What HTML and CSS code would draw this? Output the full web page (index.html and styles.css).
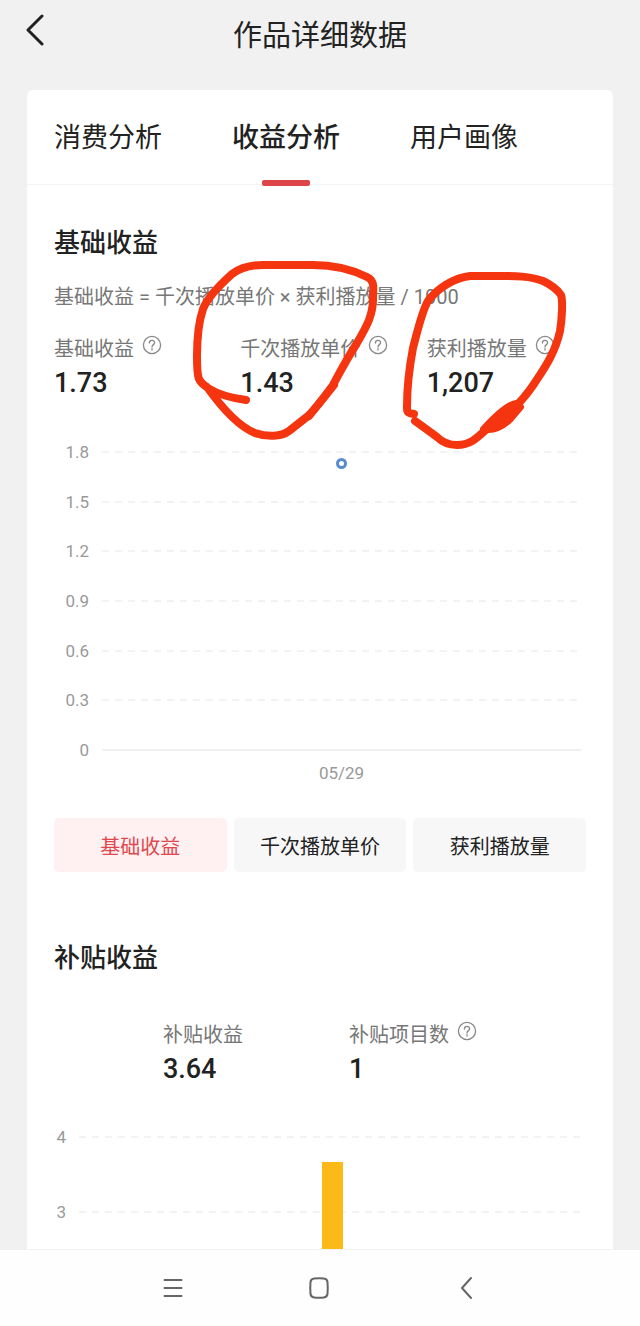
FILE: index.html
```html
<!DOCTYPE html>
<html lang="zh-CN">
<head>
    <meta charset="UTF-8">
    <meta name="viewport" content="width=device-width, initial-scale=1.0">
    <title>作品详细数据</title>
    <link rel="stylesheet" href="styles.css">
</head>
<body>

    <header class="header">
        <button class="back" aria-label="返回">
            <svg width="18" height="32" viewBox="0 0 18 32"><path d="M16 2 L2 16 L16 30"/></svg>
        </button>
        <h1>作品详细数据</h1>
    </header>

    <main class="card">

        <nav class="tabs">
            <button class="tab">消费分析</button>
            <button class="tab active">收益分析</button>
            <button class="tab">用户画像</button>
        </nav>

        <!-- Basic earnings -->
        <section class="section">
            <h2>基础收益</h2>
            <p class="formula">基础收益 = 千次播放单价 × 获利播放量 / 1000</p>

            <div class="stats">
                <div class="stat">
                    <div class="stat-label">基础收益
                        <svg class="help" viewBox="0 0 20 20"><circle cx="10" cy="10" r="8.6"/><path d="M7.4 8 C7.4 4.6 12.6 4.6 12.6 7.8 C12.6 9.7 10 9.6 10 12"/><path d="M10 13.7 V15"/></svg>
                    </div>
                    <div class="stat-value">1.73</div>
                </div>
                <div class="stat">
                    <div class="stat-label">千次播放单价
                        <svg class="help" viewBox="0 0 20 20"><circle cx="10" cy="10" r="8.6"/><path d="M7.4 8 C7.4 4.6 12.6 4.6 12.6 7.8 C12.6 9.7 10 9.6 10 12"/><path d="M10 13.7 V15"/></svg>
                    </div>
                    <div class="stat-value">1.43</div>
                </div>
                <div class="stat">
                    <div class="stat-label">获利播放量
                        <svg class="help" viewBox="0 0 20 20"><circle cx="10" cy="10" r="8.6"/><path d="M7.4 8 C7.4 4.6 12.6 4.6 12.6 7.8 C12.6 9.7 10 9.6 10 12"/><path d="M10 13.7 V15"/></svg>
                    </div>
                    <div class="stat-value">1,207</div>
                </div>
            </div>

            <div class="chart line-chart">
                <div class="row"><span>1.8</span><i></i></div>
                <div class="row"><span>1.5</span><i></i></div>
                <div class="row"><span>1.2</span><i></i></div>
                <div class="row"><span>0.9</span><i></i></div>
                <div class="row"><span>0.6</span><i></i></div>
                <div class="row"><span>0.3</span><i></i></div>
                <div class="row base"><span>0</span><i></i></div>
                <div class="plot"><b class="dot" style="bottom: 96%"></b></div>
            </div>
            <div class="x-label">05/29</div>

            <div class="switch">
                <button class="active">基础收益</button>
                <button>千次播放单价</button>
                <button>获利播放量</button>
            </div>

            <!-- Hand-drawn marks -->
            <svg class="marks" viewBox="27 185 586 280">
                <path d="M246 400 C231 398 219 395 208 388 C198 381 197 380 197 356 C197 338 199 321 203 309 C208 296 222 283 232 274 C240 268 249 265 263 265 H313 C333 265 353 270 367 277 C373 280 374 284 373 294 C374 314 367 326 357 343 C345 362 340 372 333 385 C325 396 318 406 308 416 L289 431 C281 437 267 437 255 433 C235 425 217 401 207 387"/>
                <path d="M334 385 L309 416"/>
                <path d="M414 414 C407 413 407 412 407 407 C407 385 409 369 413 348 C418 329 422 311 428 301 C437 289 453 278 470 276 H496 C516 276 530 276 543 281 C550 284 558 290 561 295 C563 301 562 319 560 331 C555 354 543 370 534 384 C520 405 504 418 489 427 C476 439 470 445 457 445 C449 445 443 443 437 437 C429 431 422 426 415 421"/>
                <path class="fill" d="M516 403 C508 404 494 417 483 429 C493 432 503 427 510 420 L521 407 Z"/>
            </svg>
        </section>

        <!-- Subsidy earnings -->
        <section class="section subsidy">
            <h2>补贴收益</h2>

            <div class="stats centered">
                <div class="stat">
                    <div class="stat-label">补贴收益</div>
                    <div class="stat-value">3.64</div>
                </div>
                <div class="stat">
                    <div class="stat-label">补贴项目数
                        <svg class="help" viewBox="0 0 20 20"><circle cx="10" cy="10" r="8.6"/><path d="M7.4 8 C7.4 4.6 12.6 4.6 12.6 7.8 C12.6 9.7 10 9.6 10 12"/><path d="M10 13.7 V15"/></svg>
                    </div>
                    <div class="stat-value">1</div>
                </div>
            </div>

            <div class="chart bar-chart">
                <div class="row"><span>4</span><i></i></div>
                <div class="row"><span>3</span><i></i></div>
                <div class="plot"><b class="bar" style="height: 58%"></b></div>
            </div>
        </section>

    </main>

    <footer class="system-nav">
        <button aria-label="菜单">
            <svg width="24" height="24" viewBox="0 0 24 24"><path d="M3.5 4 H20.5 M3.5 12 H20.5 M3.5 20 H20.5"/></svg>
        </button>
        <button aria-label="主页">
            <svg width="24" height="24" viewBox="0 0 24 24"><path d="M6 2.6 Q11 1.8 16 2.6 Q19 3 19.5 6 Q20 12 19.5 18 Q19 21 16 21.4 Q11 22.2 6 21.4 Q3 21 2.5 18 Q2 12 2.5 6 Q3 3 6 2.6 Z"/></svg>
        </button>
        <button aria-label="返回">
            <svg width="24" height="24" viewBox="0 0 24 24"><path d="M16 2 L7 12 L16 22"/></svg>
        </button>
    </footer>

</body>
</html>
```

FILE: styles.css
```css
* {
    margin: 0;
    padding: 0;
    box-sizing: border-box;
}

body {
    font-family: Roboto, 'Noto Sans CJK SC', sans-serif;
    background-color: #f1f1f1;
    color: #222;
    min-height: 100vh;
    display: flex;
    flex-direction: column;
}

button {
    font-family: inherit;
    color: inherit;
    background: none;
    border: none;
    cursor: pointer;
}

svg {
    display: block;
    fill: none;
    stroke: currentColor;
    stroke-linecap: round;
    stroke-linejoin: round;
}

/* Header */
.header {
    display: grid;
    grid-template-columns: 44px 1fr 44px;
    align-items: center;
    height: 72px;
    margin-bottom: 18px;
}

.back {
    padding: 0 0 12px 26px;
}

.back svg {
    stroke-width: 3;
}

h1 {
    font-size: 29px;
    font-weight: 400;
    line-height: 40px;
    text-align: center;
}

.card {
    flex: 1;
    margin: 0 27px;
    background-color: #fff;
    border-radius: 6px 6px 0 0;
    border-bottom: 1px solid #f3f3f3;
}

/* Tabs */
.tabs {
    display: flex;
    gap: 70px;
    padding: 0 27px;
    border-bottom: 1px solid #f4f4f4;
}

.tab {
    position: relative;
    height: 94px;
    padding-top: 2px;
    font-size: 27px;
    line-height: 40px;
    white-space: nowrap;
}

.tab.active {
    font-weight: 500;
}

.tab.active::after {
    content: '';
    position: absolute;
    left: 50%;
    bottom: -2px;
    width: 48px;
    height: 6px;
    margin-left: -24px;
    border-radius: 2px;
    background-color: #de4549;
}

/* Sections */
.section {
    position: relative;
    padding: 40px 27px 0;
}

.subsidy {
    padding-top: 68px;
}

h2 {
    font-size: 26px;
    font-weight: 500;
    line-height: 36px;
}

.formula {
    margin-top: 22px;
    font-size: 20px;
    line-height: 28px;
    color: #777;
}

.stats {
    display: grid;
    grid-template-columns: repeat(3, 1fr);
    margin: 24px -27px 0 0;
}

.stats.centered {
    display: flex;
    justify-content: center;
    margin: 45px 0 0;
}

.centered .stat:first-child {
    width: 35%;
}

.stat-label {
    display: flex;
    gap: 8px;
    font-size: 20px;
    line-height: 28px;
    color: #777;
    white-space: nowrap;
}

.help {
    width: 20px;
    height: 20px;
    stroke: #888;
    stroke-width: 1.3;
}

.stat-value {
    margin-top: 4px;
    font-size: 27px;
    font-weight: 500;
    line-height: 32px;
}

/* Charts */
.chart {
    position: relative;
    display: grid;
    grid-auto-rows: 1fr;
    margin-right: 5px;
}

.line-chart {
    height: 348px;
    margin-top: 28px;
}

.bar-chart {
    height: 150px;
    margin-top: 14px;
}

.row {
    display: flex;
    align-items: center;
    gap: 13px;
    font-size: 17px;
    line-height: 20px;
    color: #999;
}

.row span {
    width: 35px;
    text-align: right;
}

.bar-chart .row span {
    width: 12px;
}

.row i {
    flex: 1;
    height: 2px;
    background: repeating-linear-gradient(to right, #f3f3f3 0 7px, transparent 7px 13px);
}

.row.base i {
    background: #f0f0f0;
}

.plot {
    position: absolute;
    top: 25px;
    right: 0;
    bottom: 25px;
    left: 48px;
}

.bar-chart .plot {
    top: 0;
    bottom: 0;
    left: 25px;
}

.dot {
    position: absolute;
    left: 50%;
    width: 11px;
    height: 11px;
    margin: 0 0 -5px -6px;
    border: 3px solid #558bd0;
    border-radius: 50%;
    background-color: #fff;
}

.bar {
    position: absolute;
    bottom: 0;
    left: 50%;
    width: 21px;
    margin-left: -8px;
    background-color: #fcba18;
}

.x-label {
    margin: -12px 5px 0 48px;
    font-size: 17px;
    line-height: 20px;
    text-align: center;
    color: #999;
}

.switch {
    display: grid;
    grid-template-columns: repeat(3, 1fr);
    gap: 7px;
    margin-top: 35px;
}

.switch button {
    height: 54px;
    padding-top: 4px;
    border-radius: 5px;
    background-color: #f7f7f7;
    font-size: 20px;
    line-height: 28px;
}

.switch .active {
    background-color: #fff0f1;
    color: #e0484f;
}

.marks {
    position: absolute;
    top: 0;
    left: 0;
    width: 100%;
    color: #f53510;
    stroke-width: 8;
    pointer-events: none;
}

.marks .fill {
    fill: currentColor;
    stroke-width: 6;
}

/* System navigation */
.system-nav {
    display: flex;
    justify-content: center;
    gap: 123px;
    padding: 26px 0;
    background-color: #fefefe;
    color: #666;
}

.system-nav svg {
    stroke-width: 2;
}
```
